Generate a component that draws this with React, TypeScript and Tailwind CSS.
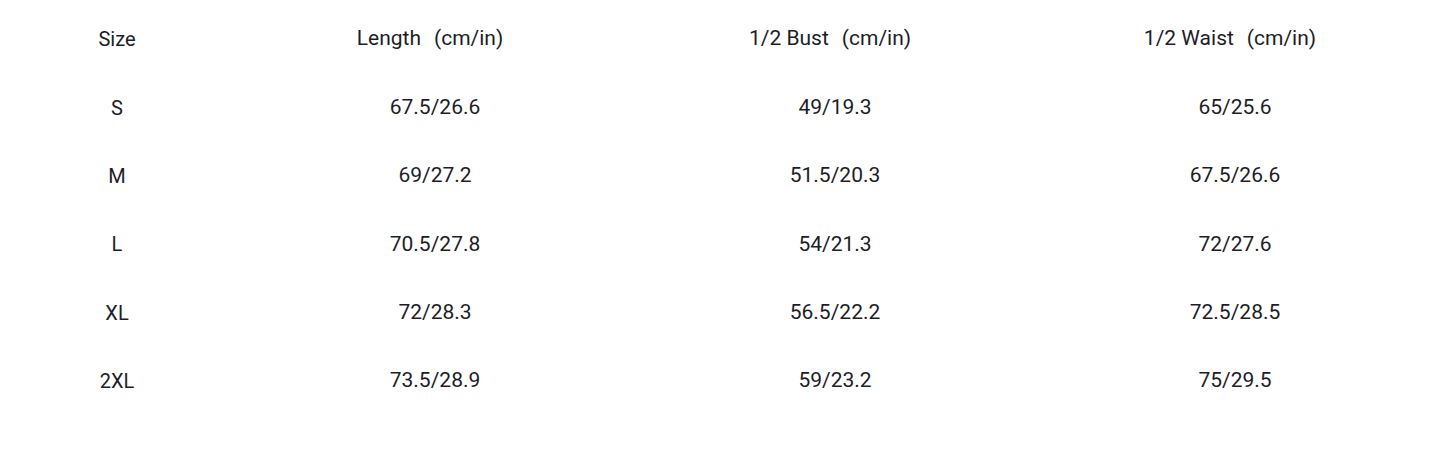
import React from "react";

const headers: [string, string][] = [
  ["Size", ""],
  ["Length", "(cm/in)"],
  ["1/2 Bust", "(cm/in)"],
  ["1/2 Waist", "(cm/in)"],
];
const rows = [
  ["S", "67.5/26.6", "49/19.3", "65/25.6"],
  ["M", "69/27.2", "51.5/20.3", "67.5/26.6"],
  ["L", "70.5/27.8", "54/21.3", "72/27.6"],
  ["XL", "72/28.3", "56.5/22.2", "72.5/28.5"],
  ["2XL", "73.5/28.9", "59/23.2", "75/29.5"],
];

export default function App() {
  return (
    <div className="w-[1445px] h-[465px] bg-white pt-[5px] text-[#1d1d29] text-[21px]" style={{ fontFamily: "Roboto, 'Liberation Sans', sans-serif" }}>
      <div className="grid grid-cols-[236px_398px_402px_398px]">
        {headers.map(([a, b], i) => (
          <div key={a} className={`h-[68.4px] flex items-center justify-center whitespace-pre ${i > 0 ? "-translate-x-[5px]" : "text-[20px] -translate-x-[1px]"}`}>
            <span>{a}</span>
            {b && <span className="ml-[13px]">{b}</span>}
          </div>
        ))}
        {rows.map((r) =>
          r.map((c, j) => (
            <div key={r[0] + j} className={`h-[68.4px] flex items-center justify-center ${j === 0 ? "-translate-x-[1px] text-[20px]" : ""}`}>
              {c}
            </div>
          ))
        )}
      </div>
    </div>
  );
}
